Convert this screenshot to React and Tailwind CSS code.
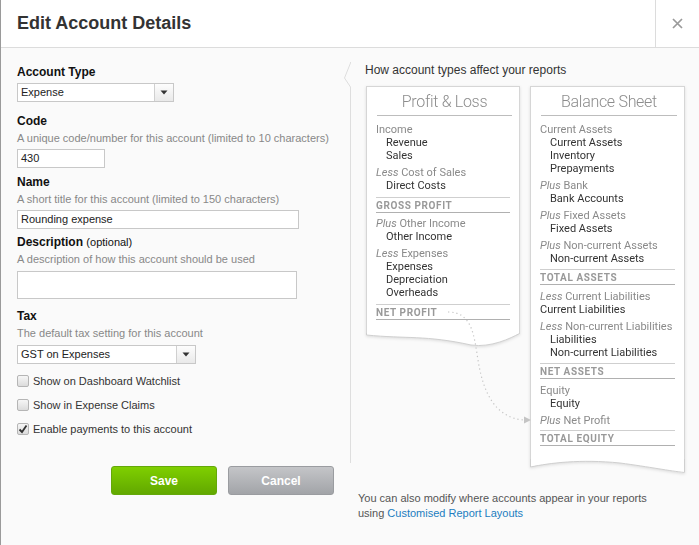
import React from "react";

const FORM_FONT = { fontFamily: '"Liberation Sans", Arial, sans-serif' };

function Select({ value, width }) {
  return (
    <div className={`${width} h-[19px] flex border border-[#c8c8c8] bg-white`}>
      <div className="flex-1 pl-[3px] text-[11px] leading-[17px] text-[#222]">{value}</div>
      <div className="w-[19px] border-l border-[#d0d0d0] bg-gradient-to-b from-[#fdfdfd] to-[#e9e9e9] flex items-center justify-center">
        <svg width="8" height="5" viewBox="0 0 8 5"><path d="M0.5 0.5 L7.5 0.5 L4 4.5 Z" fill="#333" /></svg>
      </div>
    </div>
  );
}

function Checkbox({ checked, label }) {
  return (
    <div className="flex items-center h-[16px] gap-[4px]">
      <div className="w-[12px] h-[12px] rounded-[2px] border border-[#b5b5b5] bg-gradient-to-b from-[#f6f6f6] to-[#dcdcdc] flex items-center justify-center">
        {checked && (
          <svg width="10" height="10" viewBox="0 0 10 10"><path d="M1.5 5.5 L4 8 L8.5 1.5" stroke="#333" strokeWidth="1.8" fill="none" /></svg>
        )}
      </div>
      <span className="text-[11px] text-[#333] leading-[16px]">{label}</span>
    </div>
  );
}

function Label({ children, className = "" }) {
  return <div className={`text-[12px] font-bold text-[#111] leading-[16px] ${className}`}>{children}</div>;
}
function Help({ children }) {
  return <div className="pt-[1px] text-[11px] text-[#888] leading-[16px]">{children}</div>;
}

function G({ children, className = "" }) {
  return <div className={`text-[#8a8a8a] leading-[13px] h-[13px] whitespace-nowrap ${className}`}>{children}</div>;
}
function D({ children, indent = true, className = "" }) {
  return <div className={`text-[#333] leading-[13px] h-[13px] whitespace-nowrap ${indent ? "pl-[10px]" : ""} ${className}`}>{children}</div>;
}
function I({ children }) {
  return <span className="italic">{children}</span>;
}
function Total({ children, h = "h-[16px]" }) {
  return (
    <div className={`border-t border-b border-t-[#cfcfcf] border-b-[#b0b0b0] ${h} flex items-center text-[10px] font-bold tracking-[0.6px] text-[#999]`}>
      {children}
    </div>
  );
}

function Card({ title, width, children, wave }) {
  return (
    <div className={`${width} flex flex-col drop-shadow-[0_1px_1.5px_rgba(0,0,0,0.12)]`}>
      <div className="bg-white border-x border-t border-[#d6d6d6]">
        <div className="mx-[10px] mr-[7px] pt-[5px] h-[29px] border-b border-[#bdbdbd] text-center text-[16px] font-light tracking-[-0.3px] leading-[20px] text-[#8c8c8c]">{title}</div>
        <div className="px-[9px] pt-[7px] text-[11px]">{children}</div>
      </div>
      {wave}
    </div>
  );
}

export default function App() {
  return (
    <div className="w-[699px] h-[545px] bg-[#fafafa] border-l border-[#9a9a9a] overflow-hidden flex flex-col" style={FORM_FONT}>
      <header className="h-[48px] shrink-0 bg-white border-b border-[#dcdcdc] flex">
        <h1 className="flex-1 pl-[16px] text-[18px] font-bold text-[#333] leading-[46px]">Edit Account Details</h1>
        <div className="w-[44px] border-l border-[#dcdcdc] flex items-center justify-center">
          <svg width="11" height="11" viewBox="0 0 11 11"><path d="M1 1 L10 10 M10 1 L1 10" stroke="#9a9a9a" strokeWidth="1.7" /></svg>
        </div>
      </header>

      <div className="flex flex-1">
        {/* Left form */}
        <div className="w-[343px] shrink-0 pl-[16px] pt-[16px]">
          <Label>Account Type</Label>
          <div className="mt-[3px]"><Select value="Expense" width="w-[157px]" /></div>

          <Label className="mt-[11px]">Code</Label>
          <Help>A unique code/number for this account (limited to 10 characters)</Help>
          <div className="mt-[3px] w-[88px] h-[19px] border border-[#c8c8c8] bg-white pl-[3px] text-[11px] leading-[17px] text-[#222]">430</div>

          <Label className="mt-[6px]">Name</Label>
          <Help>A short title for this account (limited to 150 characters)</Help>
          <div className="mt-[3px] w-[282px] h-[19px] border border-[#c8c8c8] bg-white pl-[3px] text-[11px] leading-[17px] text-[#222]">Rounding expense</div>

          <div className="mt-[5px] text-[12px] leading-[16px] text-[#111]"><span className="font-bold">Description</span> <span className="text-[11px]">(optional)</span></div>
          <Help>A description of how this account should be used</Help>
          <div className="mt-[4px] w-[280px] h-[28px] border border-[#c8c8c8] bg-white" />

          <Label className="mt-[9px]">Tax</Label>
          <Help>The default tax setting for this account</Help>
          <div className="mt-[4px]"><Select value="GST on Expenses" width="w-[179px]" /></div>

          <div className="mt-[9px] flex flex-col gap-[8px]">
            <Checkbox label="Show on Dashboard Watchlist" />
            <Checkbox label="Show in Expense Claims" />
            <Checkbox checked label="Enable payments to this account" />
          </div>

          <div className="mt-[29px] ml-[94px] flex gap-[11px]">
            <button className="w-[106px] h-[29px] rounded-[3px] border border-[#64a80a] bg-gradient-to-b from-[#7fcf00] to-[#62a800] text-white text-[12px] font-bold">Save</button>
            <button className="w-[106px] h-[29px] rounded-[3px] border border-[#9a9ca0] bg-gradient-to-b from-[#c4c5c8] to-[#a2a4a8] text-white text-[12px] font-bold">Cancel</button>
          </div>
        </div>

        {/* Divider with notch */}
        <div className="w-[8px] shrink-0 pt-[14px]">
          <svg width="8" height="401" viewBox="0 0 8 401">
            <path d="M6.5 0 L6.5 1 L0.5 16 L6.5 25 L6.5 401" stroke="#dedede" strokeWidth="1" fill="none" />
          </svg>
        </div>

        {/* Right info */}
        <div className="flex-1 relative pt-[14px]">
          <div className="pl-[13px] text-[12px] leading-[16px] text-[#333]">How account types affect your reports</div>
          <div className="mt-[8px] pl-[14px] flex gap-[10px] items-start" style={{ fontFamily: 'Roboto, "Open Sans", sans-serif' }}>
            <Card
              title="Profit & Loss"
              width="w-[154px]"
              wave={
                <svg width="154" height="14" viewBox="0 0 154 14" className="-mt-px block">
                  <path d="M0 0 L0 2 C40 6 60 2 105 12 C125 15 145 5 154 0 Z" fill="#fff" />
                  <path d="M0.5 0 L0.5 2 C40 6 60 2 105 12 C125 15 145 5 153.5 0.5 L153.5 0" stroke="#cfcfcf" fill="none" />
                </svg>
              }
            >
              <G>Income</G>
              <D>Revenue</D>
              <D>Sales</D>
              <G className="mt-[4px]"><I>Less</I> Cost of Sales</G>
              <D>Direct Costs</D>
              <div className="mt-[5px]"><Total>GROSS PROFIT</Total></div>
              <G className="mt-[4px]"><I>Plus</I> Other Income</G>
              <D>Other Income</D>
              <G className="mt-[4px]"><I>Less</I> Expenses</G>
              <D>Expenses</D>
              <D>Depreciation</D>
              <D>Overheads</D>
              <div className="mt-[5px] mb-[14px]"><Total h="h-[16px]">NET PROFIT</Total></div>
            </Card>

            <Card
              title="Balance Sheet"
              width="w-[155px]"
              wave={
                <svg width="155" height="15" viewBox="0 0 155 15" className="-mt-px block">
                  <path d="M0 0 L0 8 C20 4 50 0 90 4 C120 8 140 12 155 14 L155 0 Z" fill="#fff" />
                  <path d="M0.5 0 L0.5 8 C20 4 50 0 90 4 C120 8 140 12 154.5 13.5 L154.5 0" stroke="#cfcfcf" fill="none" />
                </svg>
              }
            >
              <G>Current Assets</G>
              <D>Current Assets</D>
              <D>Inventory</D>
              <D>Prepayments</D>
              <G className="mt-[4px]"><I>Plus</I> Bank</G>
              <D>Bank Accounts</D>
              <G className="mt-[4px]"><I>Plus</I> Fixed Assets</G>
              <D>Fixed Assets</D>
              <G className="mt-[4px]"><I>Plus</I> Non-current Assets</G>
              <D>Non-current Assets</D>
              <div className="mt-[4px]"><Total h="h-[16px]">TOTAL ASSETS</Total></div>
              <G className="mt-[5px]"><I>Less</I> Current Liabilities</G>
              <D indent={false}>Current Liabilities</D>
              <G className="mt-[4px]"><I>Less</I> Non-current Liabilities</G>
              <D>Liabilities</D>
              <D>Non-current Liabilities</D>
              <div className="mt-[4px]"><Total h="h-[16px]">NET ASSETS</Total></div>
              <G className="mt-[5px]">Equity</G>
              <D>Equity</D>
              <G className="mt-[4px]"><I>Plus</I> Net Profit</G>
              <div className="mt-[3px] mb-[14px]"><Total h="h-[16px]">TOTAL EQUITY</Total></div>
            </Card>
          </div>

          {/* dotted arrow overlay */}
          <svg className="absolute left-0 top-0 pointer-events-none" width="347" height="497" viewBox="352 48 347 497">
            <path d="M448 312 C472 312 474 335 478 360 C483 392 495 418 524 420" stroke="#c4c4c4" strokeWidth="1.2" strokeDasharray="1.2 3" fill="none" />
            <path d="M524 416.5 L531 420 L524 423.5 Z" fill="#c4c4c4" />
          </svg>

          <div className="mt-[17px] pl-[6px] text-[11px] leading-[15px] text-[#555]">
            <div>You can also modify where accounts appear in your reports</div>
            <div>using <span className="text-[#1c7dc0]">Customised Report Layouts</span></div>
          </div>
        </div>
      </div>
    </div>
  );
}
